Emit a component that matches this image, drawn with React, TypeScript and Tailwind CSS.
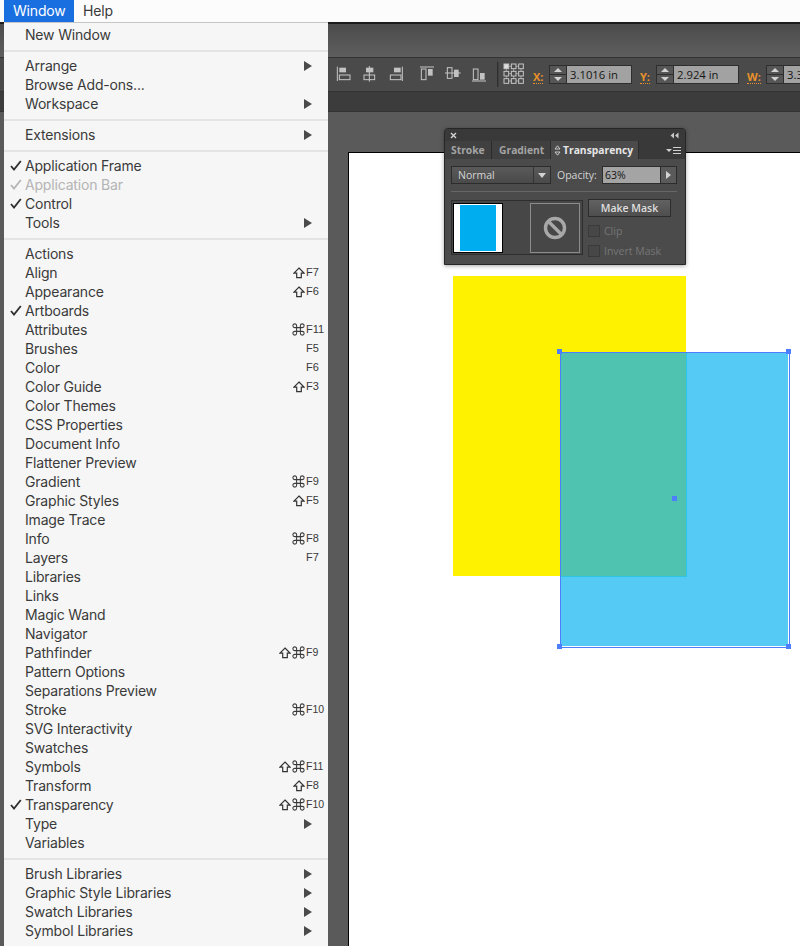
import { Command } from "lucide-react";

const GROUPS: Item[][] = [
  [{ label: "New Window" }],
  [{ label: "Arrange", sub: true }, { label: "Browse Add-ons..." }, { label: "Workspace", sub: true }],
  [{ label: "Extensions", sub: true }],
  [
    { label: "Application Frame", check: true },
    { label: "Application Bar", check: true, dim: true },
    { label: "Control", check: true },
    { label: "Tools", sub: true },
  ],
  [
    { label: "Actions" },
    { label: "Align", shift: true, keyName: "F7" },
    { label: "Appearance", shift: true, keyName: "F6" },
    { label: "Artboards", check: true },
    { label: "Attributes", cmd: true, keyName: "F11" },
    { label: "Brushes", keyName: "F5" },
    { label: "Color", keyName: "F6" },
    { label: "Color Guide", shift: true, keyName: "F3" },
    { label: "Color Themes" },
    { label: "CSS Properties" },
    { label: "Document Info" },
    { label: "Flattener Preview" },
    { label: "Gradient", cmd: true, keyName: "F9" },
    { label: "Graphic Styles", shift: true, keyName: "F5" },
    { label: "Image Trace" },
    { label: "Info", cmd: true, keyName: "F8" },
    { label: "Layers", keyName: "F7" },
    { label: "Libraries" },
    { label: "Links" },
    { label: "Magic Wand" },
    { label: "Navigator" },
    { label: "Pathfinder", shift: true, cmd: true, keyName: "F9" },
    { label: "Pattern Options" },
    { label: "Separations Preview" },
    { label: "Stroke", cmd: true, keyName: "F10" },
    { label: "SVG Interactivity" },
    { label: "Swatches" },
    { label: "Symbols", shift: true, cmd: true, keyName: "F11" },
    { label: "Transform", shift: true, keyName: "F8" },
    { label: "Transparency", check: true, shift: true, cmd: true, keyName: "F10" },
    { label: "Type", sub: true },
    { label: "Variables" },
  ],
  [
    { label: "Brush Libraries", sub: true },
    { label: "Graphic Style Libraries", sub: true },
    { label: "Swatch Libraries", sub: true },
    { label: "Symbol Libraries", sub: true },
  ],
];

type Item = {
  label: string;
  sub?: boolean;
  check?: boolean;
  dim?: boolean;
  shift?: boolean;
  cmd?: boolean;
  keyName?: string;
};

function ShiftIcon() {
  return (
    <svg width="12" height="12" viewBox="0 0 12 12" className="shrink-0">
      <path d="M6 1 L11 6.2 H8.3 V10.7 H3.7 V6.2 H1 Z" fill="none" stroke="#333333" strokeWidth="1.2" />
    </svg>
  );
}

function MenuRow({ item }: { item: Item }) {
  const text = item.dim ? "text-[#b4b4b4]" : "text-[#3a3a3a]";
  return (
    <div className={`flex items-center h-[19px] ${text}`}>
      <div className="w-[21px] shrink-0 pl-[6px] flex items-center">
        {item.check && (
          <svg width="12" height="11" viewBox="0 0 12 11">
            <path d="M1 6 L4 9.5 L10.8 1" fill="none" stroke={item.dim ? "#b4b4b4" : "#2e2e2e"} strokeWidth="1.8" />
          </svg>
        )}
      </div>
      <div className="flex-1 text-[14px] tracking-[-0.18px] whitespace-nowrap">{item.label}</div>
      <div className="w-[49px] shrink-0 flex items-center">
        <div className="w-[27px] shrink-0 flex items-center justify-end gap-[2px]">
          {item.shift && <ShiftIcon />}
          {item.shift && !item.cmd && <div className="w-0 mr-[-1px]" />}
          {item.cmd && <Command size={15} strokeWidth={1.7} color="#3a3a3a" className="shrink-0 -ml-[2px]" />}
        </div>
        {item.keyName && (
          <span className={`text-[#3a3a3a] font-['Liberation_Sans',sans-serif] ${(item.shift && item.cmd) || item.keyName === "F10" ? "text-[10.5px]" : "text-[11px]"}`}>
            {item.keyName}
          </span>
        )}
        {item.sub && (
          <svg width="8" height="10" viewBox="0 0 8 10" className="ml-[-2px]">
            <path d="M0 0 L8 5 L0 10 Z" fill="#4a4a4a" />
          </svg>
        )}
      </div>
    </div>
  );
}

function WindowMenu() {
  return (
    <div className="absolute left-[4px] top-[22px] w-[324px] h-[924px] bg-[#f6f6f6] border-t border-[#c6c6c6] pt-[2px] overflow-hidden font-['Inter',sans-serif]">
      {GROUPS.map((group, i) => (
        <div key={i}>
          {i > 0 && <div className="h-[2px] mt-[6px] mb-[4px] bg-[#e4e4e4]" />}
          {group.map((item) => (
            <MenuRow key={item.label} item={item} />
          ))}
        </div>
      ))}
    </div>
  );
}

// align buttons + reference point grid, coords are 3x so they line up with the toolbar
function AlignIcons() {
  const line = "#c6c6c6";
  const fill = "#c2c2c2";
  const grid = [522, 544, 566];
  const gridY = [27, 49, 71];
  return (
    <svg width="200" height="40" viewBox="0 0 600 120" className="shrink-0">
      <g fill="none" stroke={line} strokeWidth="3">
        <path d="M22 35V78 M118 33V80 M217 35V78 M270 36H312 M345 54H392 M426 78H468" />
        <rect x="28" y="60" width="32" height="14" />
        <rect x="102" y="60" width="32" height="14" />
        <rect x="181" y="60" width="32" height="14" />
        <rect x="274" y="42" width="14" height="32" />
        <rect x="352" y="38" width="14" height="32" />
        <rect x="430" y="42" width="14" height="32" />
      </g>
      <g fill={fill}>
        <rect x="28" y="38" width="20" height="14" />
        <rect x="108" y="38" width="22" height="14" />
        <rect x="192" y="38" width="20" height="14" />
        <rect x="294" y="42" width="14" height="20" />
        <rect x="372" y="44" width="14" height="22" />
        <rect x="450" y="54" width="14" height="20" />
      </g>
      <path d="M503 20V95" stroke="#2f2f2f" strokeWidth="4" />
      <path d="M536 34H566 M536 56H566 M536 78H566 M529 41V71 M551 41V71 M573 41V71" stroke={line} strokeWidth="2" />
      {gridY.map((y) =>
        grid.map((x) => (
          <rect key={`${x}-${y}`} x={x} y={y} width="14" height="14" fill={x === 522 && y === 27 ? "#dcdcdc" : "#4b4b4b"} stroke={line} strokeWidth="3" />
        )),
      )}
    </svg>
  );
}

function Stepper() {
  return (
    <div className="w-[18px] h-[19px] shrink-0 flex flex-col border border-[#2e2e2e] bg-[#565656]">
      <div className="flex-1 flex items-center justify-center border-b border-[#2e2e2e]">
        <div className="w-0 h-0 border-x-[4px] border-x-transparent border-b-[4px] border-b-[#d2d2d2]" />
      </div>
      <div className="flex-1 flex items-center justify-center">
        <div className="w-0 h-0 border-x-[4px] border-x-transparent border-t-[4px] border-t-[#d2d2d2]" />
      </div>
    </div>
  );
}

function CoordField({ label, value, labelW, fieldW }: { label: string; value: string; labelW: string; fieldW: string }) {
  return (
    <div className="flex items-center shrink-0">
      <div className={`${labelW} shrink-0`}>
        <span className="text-[11px] leading-[13px] inline-block font-bold text-[#e8912a] border-b border-dotted border-[#e8912a]">{label}</span>
      </div>
      <Stepper />
      <div className={`${fieldW} shrink-0 h-[19px] bg-[#a2a2a2] border-y border-r border-[#2e2e2e] text-[#161616] text-[11.3px] leading-[18px] pl-[3px] overflow-hidden whitespace-nowrap`}>
        {value}
      </div>
    </div>
  );
}

function TransparencyPanel() {
  return (
    <div className="absolute left-[444px] top-[128px] w-[242px] h-[137px] bg-[#4b4b4b] border border-[#262626] rounded-t-[4px] font-['Open_Sans',sans-serif] shadow-[0_1px_4px_rgba(0,0,0,0.35)]">
      <div className="h-[12px] bg-[#393939] rounded-t-[4px] flex items-center justify-between pl-[5px] pr-[6px] text-[#d0d0d0]">
        <svg width="7" height="7" viewBox="0 0 7 7">
          <path d="M1 1L6 6M6 1L1 6" stroke="#d8d8d8" strokeWidth="1.3" />
        </svg>
        <svg width="9" height="7" viewBox="0 0 9 7">
          <path d="M4 0.5V6.5L0.5 3.5Z M8.5 0.5V6.5L5 3.5Z" fill="#c8c8c8" />
        </svg>
      </div>
      <div className="h-[18px] bg-[#393939] flex items-stretch text-[10.3px] font-bold leading-[18px]">
        <div className="w-[47px] pl-[6px] text-[#a4a4a4] border-r border-[#2c2c2c] bg-[#404040]">Stroke</div>
        <div className="w-[58px] pl-[7px] text-[#a4a4a4] bg-[#404040]">Gradient</div>
        <div className="w-[89px] bg-[#4b4b4b] border-x border-[#2c2c2c] text-[#e6e6e6] flex items-center pl-[3px] gap-[2px]">
          <svg width="7" height="11" viewBox="0 0 7 11" className="shrink-0">
            <path d="M3.5 0.8L6 4H1Z M3.5 10.2L1 7H6Z" fill="none" stroke="#d4d4d4" strokeWidth="0.9" />
          </svg>
          Transparency
        </div>
        <div className="flex-1 flex items-center justify-end pr-[4px] gap-[1px]">
          <div className="w-0 h-0 border-x-[3px] border-x-transparent border-t-[3px] border-t-[#d0d0d0]" />
          <div className="w-[8px] h-[7px] border-y border-[#d0d0d0] flex items-center">
            <div className="w-full h-px bg-[#d0d0d0]" />
          </div>
        </div>
      </div>
      <div className="px-[6px] pt-[7px]">
        <div className="flex items-center text-[10.5px]">
          <div className="w-[100px] h-[18px] border border-[#2c2c2c] bg-gradient-to-b from-[#5a5a5a] to-[#4a4a4a] flex items-center text-[#d4d4d4] pl-[6px]">
            <span className="flex-1 pt-[2px]">Normal</span>
            <div className="w-[17px] h-full border-l border-[#353535] flex items-center justify-center">
              <div className="w-0 h-0 border-x-[4px] border-x-transparent border-t-[5px] border-t-[#d2d2d2]" />
            </div>
          </div>
          <span className="ml-[6px] w-[45px] pt-[2px] text-[#d4d4d4] whitespace-nowrap">Opacity:</span>
          <div className="w-[59px] h-[18px] bg-[#a4a4a4] border border-[#2c2c2c] text-[#141414] leading-[17px] pl-[2px]">63%</div>
          <div className="w-[16px] h-[18px] border-y border-r border-[#2c2c2c] bg-[#5a5a5a] flex items-center justify-center">
            <div className="w-0 h-0 border-y-[4px] border-y-transparent border-l-[5px] border-l-[#d2d2d2]" />
          </div>
        </div>
        <div className="h-px bg-[#666666] mt-[7px] mb-[8px] w-[226px]" />
        <div className="flex items-start">
          <div className="w-[132px] h-[55px] border border-[#2e2e2e] bg-[#474747] flex items-center pl-[1px] gap-[27px] shrink-0">
            <div className="w-[50px] h-[50px] bg-white border border-black flex items-center justify-center">
              <div className="w-[36px] h-[46px] bg-[#00aeef]" />
            </div>
            <div className="w-[50px] h-[50px] border border-[#8c8c8c] flex items-center justify-center">
              <svg width="24" height="24" viewBox="0 0 24 24">
                <circle cx="12" cy="12" r="9.5" fill="none" stroke="#a8a8a8" strokeWidth="3.4" />
                <path d="M5.5 5.5L18.5 18.5" stroke="#a8a8a8" strokeWidth="3.4" />
              </svg>
            </div>
          </div>
          <div className="ml-[5px] -mt-[1px]">
            <div className="w-[83px] h-[18px] border border-[#2c2c2c] bg-gradient-to-b from-[#626262] to-[#4e4e4e] text-[10.5px] font-semibold text-[#dedede] leading-[17px] text-center">
              Make Mask
            </div>
            <div className="flex items-center h-[12px] mt-[8px] gap-[4px] text-[10.5px] text-[#767676]">
              <div className="w-[12px] h-[12px] border border-[#3a3a3a] bg-[#474747]" />
              <span className="pt-[2px]">Clip</span>
            </div>
            <div className="flex items-center h-[12px] mt-[8px] gap-[4px] text-[10.5px] text-[#767676]">
              <div className="w-[12px] h-[12px] border border-[#3a3a3a] bg-[#474747]" />
              <span className="pt-[2px]">Invert Mask</span>
            </div>
          </div>
        </div>
      </div>
    </div>
  );
}

function Artwork() {
  return (
    <>
      <div className="absolute left-[453px] top-[276px] w-[233px] h-[300px] bg-[#fff200]" />
      <div className="absolute left-[561px] top-[353px] w-[227px] h-[293px] bg-[#55caf5]" />
      <div className="absolute left-[561px] top-[353px] w-[126px] h-[224px] bg-[#50c2b0] border-r border-b border-[#2cc5e8]" />
      <div className="absolute left-[560px] top-[352px] w-[230px] h-[296px] border border-[#4d7eff]" />
      <div className="absolute left-[557px] top-[349px] w-[5px] h-[5px] bg-[#4d7eff]" />
      <div className="absolute left-[786px] top-[349px] w-[5px] h-[5px] bg-[#4d7eff]" />
      <div className="absolute left-[557px] top-[644px] w-[5px] h-[5px] bg-[#4d7eff]" />
      <div className="absolute left-[786px] top-[644px] w-[5px] h-[5px] bg-[#4d7eff]" />
      <div className="absolute left-[672px] top-[496px] w-[5px] h-[5px] bg-[#4d7eff]" />
    </>
  );
}

export default function App() {
  return (
    <div className="relative w-[800px] h-[946px] overflow-hidden flex flex-col bg-[#5a5a5a] font-['Open_Sans',sans-serif]">
      <div className="h-[22px] shrink-0 bg-[#fcfcfc] flex items-stretch pl-[4px] text-[14px] tracking-[-0.18px] font-['Inter',sans-serif]">
        <div className="w-[70px] bg-[#1a6fe0] text-white pl-[9px] leading-[22px]">Window</div>
        <div className="pl-[9px] text-[#3a3a3a] leading-[22px]">Help</div>
      </div>
      <div className="h-[2px] shrink-0 bg-[#1c1c1c]" />
      <div className="h-[34px] shrink-0 bg-gradient-to-b from-[#4c4c4c] to-[#5e5e5e] border-b border-[#333333]" />
      <div className="h-[34px] shrink-0 bg-[#4a4a4a] border-b border-[#333333] flex items-center pl-[330px]">
        <AlignIcons />
        <div className="flex items-center ml-[3px]">
          <CoordField label="X:" value="3.1016 in" labelW="w-[16px]" fieldW="w-[65px]" />
          <div className="w-[8px] shrink-0" />
          <CoordField label="Y:" value="2.924 in" labelW="w-[16px]" fieldW="w-[65px]" />
          <div className="w-[8px] shrink-0" />
          <CoordField label="W:" value="3.3" labelW="w-[19px]" fieldW="w-[30px]" />
        </div>
      </div>
      <div className="h-[20px] shrink-0 bg-[#3c3c3c] border-b border-[#333333]" />
      <div className="flex-1 min-h-0 pl-[348px] pt-[40px]">
        <div className="h-full w-[460px] bg-white border-l border-t border-black" />
      </div>
      <Artwork />
      <TransparencyPanel />
      <WindowMenu />
    </div>
  );
}
